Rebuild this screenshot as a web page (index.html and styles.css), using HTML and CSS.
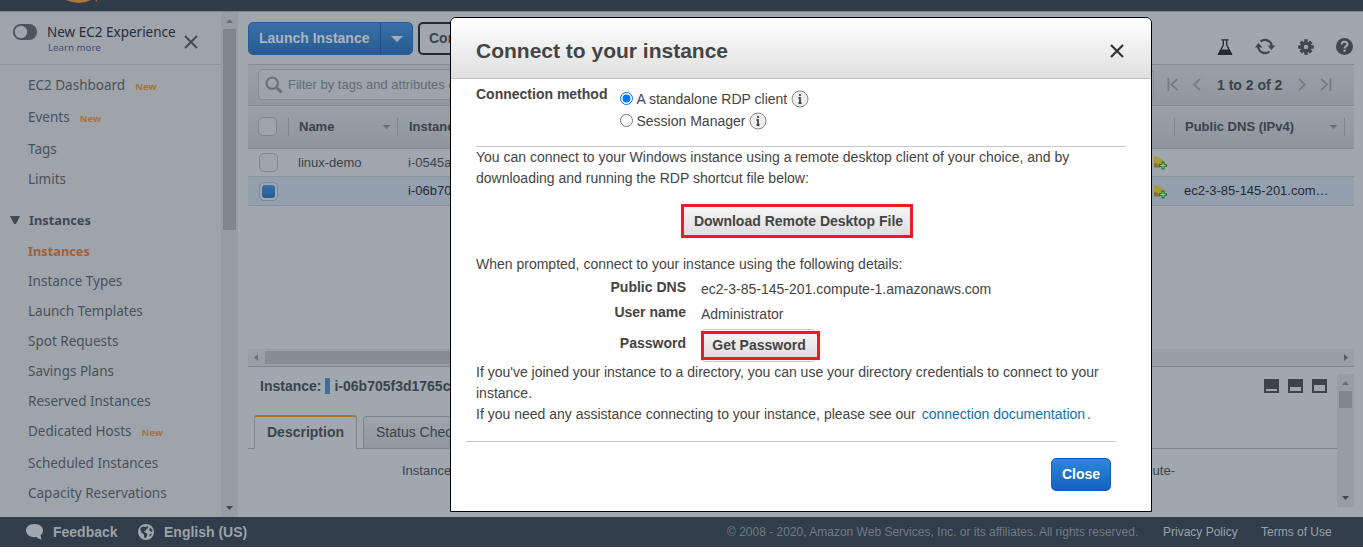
FILE: index.html
```html
<!DOCTYPE html>
<html lang="en">
<head>
<meta charset="utf-8">
<title>Connect to your instance</title>
<link rel="stylesheet" href="styles.css">
</head>
<body>
<header class="topbar">
  <svg class="smile" width="60" height="11" viewBox="0 0 60 11"><path d="M12 -1H41Q27 7 12 -1Z" fill="#a5793c"/><path d="M44.500 0L44 1.500" stroke="#a5793c" stroke-width="1.200"/></svg>
</header>
<div class="page">
  <aside class="sidebar">
    <div class="nav">
      <div class="experience">
        <svg class="toggle" width="24" height="16" viewBox="0 0 24 16"><rect width="24" height="16" rx="8" fill="#4b535e"/><circle cx="8" cy="8" r="6.200" fill="#a0a4ab"/></svg>
        <div class="exp-text"><div class="exp-title">New EC2 Experience</div><div class="exp-link">Learn more</div></div>
        <svg class="exp-close" width="14" height="14" viewBox="0 0 14 14"><path d="M1 1L13 13M13 1L1 13" stroke="#3f4852" stroke-width="1.800"/></svg>
      </div>
      <ul class="menu">
        <li class="h32">EC2 Dashboard<b>New</b></li>
        <li class="h32">Events<b>New</b></li>
        <li class="h30">Tags</li>
        <li class="h30">Limits</li>
        <li class="group"><svg width="10" height="9" viewBox="0 0 10 9"><path d="M0 0H10L6 8H4Z" fill="#434c56"/></svg>Instances</li>
        <li class="h30 current">Instances</li>
        <li class="h30">Instance Types</li>
        <li class="h30">Launch Templates</li>
        <li class="h30">Spot Requests</li>
        <li class="h30">Savings Plans</li>
        <li class="h30">Reserved Instances</li>
        <li class="h32">Dedicated Hosts<b>New</b></li>
        <li class="h30">Scheduled Instances</li>
        <li class="h30">Capacity Reservations</li>
      </ul>
    </div>
    <div class="vscroll">
      <svg width="7" height="4" viewBox="0 0 7 4"><path d="M0 4L3.500 0L7 4Z" fill="#686e76"/></svg>
      <div class="thumb"></div>
      <svg class="down" width="7" height="4" viewBox="0 0 7 4"><path d="M0 0L3.500 4L7 0Z" fill="#434a53"/></svg>
    </div>
  </aside>
  <main class="main">
    <div class="toolbar">
      <div class="launch"><span>Launch Instance</span><i><svg width="12" height="6" viewBox="0 0 12 6"><path d="M0 0H12L6 6Z" fill="#a5adb4"/></svg></i></div>
      <div class="connect">Con</div>
      <div class="tools">
        <svg width="16" height="16" viewBox="0 0 16 16"><path d="M4.500 .8H11.500M6.300 1V6L1.800 14.500H14.200L9.700 6V1" fill="none" stroke="#222a33" stroke-width="1.300"/><path d="M4 10.500H12L15.500 16H.5Z" fill="#222a33"/></svg>
        <svg width="20" height="17" viewBox="0 0 20 17"><path d="M5.500 3.500A6.800 6.800 0 0 1 16.700 8M14.500 13.500A6.800 6.800 0 0 1 3.300 9" fill="none" stroke="#3f474f" stroke-width="2.300"/><path d="M12.500 7.500H20.200L16.500 12ZM-.2 9.500H7.500L3.500 5Z" fill="#3f474f"/></svg>
        <svg width="16" height="16" viewBox="-8 -8 16 16"><g fill="#3f474f"><circle r="5.600"/><path d="M-1.800 -7.800H1.800V7.800H-1.800Z"/><path d="M-1.800 -7.500H1.800V7.500H-1.800Z" transform="rotate(45)"/><path d="M-1.800 -7.800H1.800V7.800H-1.800Z" transform="rotate(90)"/><path d="M-1.800 -7.500H1.800V7.500H-1.800Z" transform="rotate(135)"/></g><circle r="2.200" fill="#a0a7ae"/></svg>
        <svg width="17" height="17" viewBox="0 0 17 17"><circle cx="8.500" cy="8.500" r="8.500" fill="#3f474f"/><path d="M5.500 6.500C5.500 2.800 11.500 2.900 11.500 6.200C11.500 8.400 8.600 8 8.600 10.500" fill="none" stroke="#a0a7ae" stroke-width="2.100"/><rect x="7.500" y="11.600" width="2.200" height="2.200" fill="#a0a7ae"/></svg>
      </div>
    </div>
    <div class="filterbar">
      <div class="search"><svg width="18" height="18" viewBox="0 0 18 18"><circle cx="7.200" cy="7.200" r="5.700" fill="none" stroke="#6b7279" stroke-width="2.200"/><path d="M11.500 11.500L16.500 16.300" stroke="#6b7279" stroke-width="3"/></svg><span>Filter by tags and attributes o</span></div>
      <div class="pager">
        <svg width="12" height="14" viewBox="0 0 12 14"><path d="M1.500 0V13M10.500 .8L4.500 6.500L10.500 12.200" fill="none" stroke="#737b84" stroke-width="1.800"/></svg>
        <svg width="8" height="14" viewBox="0 0 8 14"><path d="M7 .8L1.200 6.500L7 12.200" fill="none" stroke="#737b84" stroke-width="1.800"/></svg>
        <span>1 to 2 of 2</span>
        <svg width="8" height="14" viewBox="0 0 8 14"><path d="M1 .8L6.800 6.500L1 12.200" fill="none" stroke="#737b84" stroke-width="1.800"/></svg>
        <svg width="12" height="14" viewBox="0 0 12 14"><path d="M1 .8L7 6.500L1 12.200M10.500 0V13" fill="none" stroke="#737b84" stroke-width="1.800"/></svg>
      </div>
    </div>
    <div class="row thead">
      <span class="cbx"></span><span class="name">Name<svg width="7" height="4" viewBox="0 0 7 4"><path d="M0 0H7L3.500 4Z" fill="#646c74"/></svg></span><span class="iid">Instance</span><span class="dns">Public DNS (IPv4)<svg width="7" height="4" viewBox="0 0 7 4"><path d="M0 0H7L3.500 4Z" fill="#646c74"/></svg></span>
    </div>
    <div class="row r1">
      <span class="cbx"></span><span class="name">linux-demo</span><span class="iid">i-0545a</span><span class="alarm"><svg width="14" height="15" viewBox="0 0 14 15"><path d="M-2 1L3 1.500L9 5L11 8V12H3L-2 10Z" fill="#a79a35"/><path d="M-2 8Q3 7 6 12.500H0Z" fill="#857336"/><path d="M7.500 6.500H10.500V9H13V12H10.500V14.500H7.500V12H5V9H7.500Z" fill="#267b3b"/><path d="M9 8V13M6.500 10.500H11.500" stroke="#a6c4a6"/></svg></span><span class="dns"></span>
    </div>
    <div class="row r2">
      <span class="cbx on"></span><span class="name"></span><span class="iid">i-06b70</span><span class="alarm"><svg width="14" height="15" viewBox="0 0 14 15"><path d="M-2 1L3 1.500L9 5L11 8V12H3L-2 10Z" fill="#a79a35"/><path d="M-2 8Q3 7 6 12.500H0Z" fill="#857336"/><path d="M7.500 6.500H10.500V9H13V12H10.500V14.500H7.500V12H5V9H7.500Z" fill="#267b3b"/><path d="M9 8V13M6.500 10.500H11.500" stroke="#a6c4a6"/></svg></span><span class="dns">ec2-3-85-145-201.com…</span>
    </div>
    <div class="hscroll">
      <svg width="4" height="7" viewBox="0 0 4 7"><path d="M4 0V7L0 3.500Z" fill="#6a7179"/></svg><div class="hthumb"></div><svg width="4" height="7" viewBox="0 0 4 7"><path d="M0 0V7L4 3.500Z" fill="#555d66"/></svg>
    </div>
    <div class="detail">
      <div class="dbody">
        <div class="dhead"><span>Instance:</span><i></i><span>i-06b705f3d1765c</span>
          <div class="panes">
            <svg width="15" height="14"><rect width="15" height="14" fill="#3b434c"/><rect x="2" y="10" width="11" height="2" fill="#a0a7ae"/></svg>
            <svg width="15" height="14"><rect width="15" height="14" fill="#3b434c"/><rect x="2" y="8" width="11" height="4" fill="#a0a7ae"/></svg>
            <svg width="15" height="14"><rect width="15" height="14" fill="#3b434c"/><rect x="2" y="6" width="11" height="6" fill="#a0a7ae"/></svg>
          </div>
        </div>
        <div class="tabs"><span class="tab active">Description</span><span class="tab">Status Check</span></div>
        <div class="fields"><span>Instance</span><span class="ute">ute-</span></div>
      </div>
      <div class="vscroll small">
        <svg width="7" height="4" viewBox="0 0 7 4"><path d="M0 4L3.500 0L7 4Z" fill="#686e76"/></svg>
        <div class="thumb"></div>
        <svg class="down" width="7" height="4" viewBox="0 0 7 4"><path d="M0 0L3.500 4L7 0Z" fill="#434a53"/></svg>
      </div>
    </div>
  </main>
</div>
<footer class="footer">
  <svg width="18" height="16" viewBox="0 0 18 16"><path d="M8.500 0C13.500 0 17 2.800 17 6.500C17 8.500 16.200 10 14.700 11.200C14.600 13 15.300 14.800 16 15.600C13.500 15.500 11.800 14.500 10.700 13C4.500 13.800 0 11 0 6.500C0 2.800 3.500 0 8.500 0Z" fill="#a0a7ae"/></svg>
  <b class="fb">Feedback</b>
  <svg width="16" height="16" viewBox="0 0 16 16"><circle cx="8" cy="8" r="8" fill="#a0a7ae"/><path d="M2.500 4L5 2.500L8 3L9.500 2L10.500 4L8 5.500L7.500 7L5.500 7.500L8 9L9.500 9.500L9 12L7.500 14.500L6 13V10.500L3.500 8.500L2.500 6.500ZM12.500 4L14.500 6L14 8L12 7L11 5.500ZM12 10L14 9.500L12.500 12L11 12.500Z" fill="#313d4b"/></svg>
  <b class="lang">English (US)</b>
  <span class="copy">© 2008 - 2020, Amazon Web Services, Inc. or its affiliates. All rights reserved.</span>
  <span class="priv">Privacy Policy</span>
  <span class="terms">Terms of Use</span>
</footer>

<section class="modal">
  <div class="mhead"><h1>Connect to your instance</h1><svg width="14" height="14" viewBox="0 0 14 14"><path d="M1 1L13 13M13 1L1 13" stroke="#333" stroke-width="2.200"/></svg></div>
  <div class="method">
    <b>Connection method</b>
    <div class="options">
      <div class="opt"><input type="radio" name="m" checked><span>A standalone RDP client</span><svg width="18" height="18" viewBox="0 0 18 18"><circle cx="9" cy="9" r="8" fill="#eee" stroke="#888"/><path d="M9 4V6M7.500 8H9V13M7.500 13H10.500" stroke="#444" stroke-width="1.800" fill="none"/></svg></div>
      <div class="opt"><input type="radio" name="m"><span>Session Manager</span><svg width="18" height="18" viewBox="0 0 18 18"><circle cx="9" cy="9" r="8" fill="#eee" stroke="#888"/><path d="M9 4V6M7.500 8H9V13M7.500 13H10.500" stroke="#444" stroke-width="1.800" fill="none"/></svg></div>
    </div>
  </div>
  <p class="intro">You can connect to your Windows instance using a remote desktop client of your choice, and by<br>downloading and running the RDP shortcut file below:</p>
  <div class="dl"><button class="btn download">Download Remote Desktop File</button></div>
  <p class="prompt">When prompted, connect to your instance using the following details:</p>
  <dl class="creds">
    <dt>Public DNS</dt><dd>ec2-3-85-145-201.compute-1.amazonaws.com</dd>
    <dt>User name</dt><dd>Administrator</dd>
    <dt class="pw">Password</dt><dd class="pwcell"><span class="getwrap"><button class="btn get">Get Password</button></span></dd>
  </dl>
  <p class="help">If you've joined your instance to a directory, you can use your directory credentials to connect to your<br>instance.<br>If you need any assistance connecting to your instance, please see our <a>connection documentation</a>.</p>
  <div class="mfoot"><button class="close">Close</button></div>
</section>
</body>
</html>
```

FILE: styles.css
```css
* { box-sizing: border-box; }
body { margin: 0; width: 1363px; height: 553px; overflow: hidden; background: #fff; font: 13px/18px "Liberation Sans", Arial, sans-serif; color: #3b434c; display: flex; flex-direction: column; }
svg { display: block; flex: none; }
.topbar { height: 11px; background: #313c4a; flex: none; padding-left: 52px; }
.page { height: 506px; flex: none; display: flex; background: #a0a7ae; border-top: 1px solid #7d838e; }

.sidebar { width: 238px; display: flex; background: #9fa4ab; font-family: "Noto Sans", "Open Sans", sans-serif; }
.nav { width: 221px; }
.experience { height: 53px; border-bottom: 1px solid #8e949e; display: flex; padding: 12px 0 0 13px; }
.exp-text { margin-left: 10px; width: 137px; white-space: nowrap; }
.exp-title { font-size: 13.500px; line-height: 18px; color: #252d38; margin-top: -1px; }
.exp-link { font-size: 9.700px; line-height: 14px; color: #3d4f82; margin-left: 1px; }
.exp-close { margin-top: 11px; }
.menu { list-style: none; margin: 0; padding: 5px 0 0 28px; font-size: 13.500px; color: #48515c; white-space: nowrap; }
.menu li { display: flex; align-items: center; }
.menu b { font-size: 9.500px; color: #a9713a; margin-left: 10px; margin-top: 3px; }
.menu .h32 { height: 32px; padding-bottom: 2px; }
.menu .h30 { height: 30px; }
.menu .group { height: 32px; margin: 10px 0 0 -18px; font-size: 12.800px; font-weight: bold; color: #3f4852; }
.group svg { margin-right: 9px; }
.menu .current { color: #a3602f; font-size: 12.800px; font-weight: bold; }
.vscroll { width: 17px; background: #969da4; display: flex; flex-direction: column; align-items: center; padding: 7px 0; }
.thumb { width: 13px; height: 201px; margin-top: 6px; background: #7f868c; }
.down { margin-top: auto; }

.main { flex: 1; padding: 10px 9px 0 10px; min-width: 0; }
.toolbar { height: 42px; display: flex; }
.launch { width: 165px; height: 33px; border: 1px solid #265b95; border-radius: 5px; background: linear-gradient(#3a70a8, #265b93); color: #adb5bc; font-size: 14px; font-weight: bold; display: flex; align-items: center; }
.launch span { width: 132px; padding-left: 10px; line-height: 31px; border-right: 1px solid #1f4f87; white-space: nowrap; }
.launch i { flex: 1; display: grid; place-items: center; }
.connect { margin-left: 5px; width: 90px; height: 33px; border: 2px solid #222b35; border-radius: 5px; line-height: 29px; padding-left: 9px; font-size: 14px; font-weight: bold; }
.tools { margin: 16px 1px 0 auto; width: 136px; height: 17px; display: flex; align-items: center; justify-content: space-between; }
.filterbar { height: 42px; background: linear-gradient(#99a0a7, #90979e); border-top: 1px solid #848b92; border-bottom: 1px solid #7f868d; display: flex; justify-content: space-between; padding-top: 4px; }
.search { margin-left: 10px; width: 896px; height: 31px; border: 1px solid #858c94; border-radius: 5px; background: #9da4ab; display: flex; align-items: center; padding-left: 6px; color: #646b73; }
.search span { margin-left: 5px; white-space: nowrap; }
.pager { width: 187px; height: 32px; display: flex; align-items: center; font-size: 14px; font-weight: bold; }
.pager span { width: 67px; margin: 0 14px 0 16px; white-space: nowrap; }
.pager svg + svg { margin-left: 14px; }
.row { display: flex; align-items: center; height: 28px; padding-left: 11px; }
.row .iid { width: 746px; }
.row .name { width: 110px; margin-left: 20px; }
.thead { height: 43px; background: linear-gradient(#99a0a7, #8e959c); border-top: 1px solid #a2a9b0; border-bottom: 1px solid #7f868d; font-weight: bold; padding: 0 0 2px 10px; }
.thead .name { border-left: 1px solid #7d858c; width: 109px; margin-left: 11px; padding: 0 7px 0 10px; display: flex; align-items: center; justify-content: space-between; }
.thead .iid { border-left: 1px solid #7d858c; padding-left: 11px; width: 777px; }
.cbx { width: 19px; height: 19px; border: 1px solid #7f868e; border-radius: 5px; background: #9da4ab; flex: none; }
.cbx.on { padding: 2px; background: #a0a7ae; display: grid; }
.cbx.on::before { content: ""; background: linear-gradient(#3a70a8, #265b93); border-radius: 3px; }
.alarm { width: 30px; margin-left: -1px; padding-left: 1px; }
.r1 .dns, .r2 .dns { width: 155px; padding-left: 1px; }
.thead .dns { width: 171px; border-left: 1px solid #7d858c; border-right: 1px solid #7d858c; padding: 0 7px 0 10px; display: flex; align-items: center; justify-content: space-between; }
.thead span { line-height: 18px; white-space: nowrap; }
.r1 { border-bottom: 1px solid #8c939b; }
.r2 { height: 29px; background: #95a0ae; border-bottom: 1px solid #89929b; color: #222a33; }
.hscroll { height: 18px; margin-top: 143px; background: #999fa6; border-bottom: 1px solid #7d848b; display: flex; align-items: center; padding: 0 6px; }
.hthumb { width: 870px; height: 13px; margin-left: 7px; margin-right: auto; background: #868d94; }
.detail { display: flex; height: 133px; margin-top: 7px; }
.dbody { flex: 1; }
.dhead { display: flex; align-items: center; height: 24px; padding-left: 12px; font-weight: bold; font-size: 14px; }
.dhead i { width: 5px; height: 16px; background: #3c6f9c; margin: 0 4px; }
.panes { display: flex; gap: 9px; margin: 0 10px 0 auto; }
.tabs { display: flex; margin-top: 17px; height: 34px; padding-left: 6px; border-bottom: 1px solid #7f868d; }
.tab { height: 33px; margin-top: 1px; border: 1px solid #7f868d; border-radius: 3px 3px 0 0; line-height: 31px; padding-left: 12px; margin-left: 6px; width: 110px; font-size: 14px; background: linear-gradient(#9da4ab, #90979e); white-space: nowrap; }
.tab.active { margin: 0; width: 103px; height: 34px; border-top: 2px solid #aa762d; border-bottom: 0; background: #a0a7ae; font-weight: bold; line-height: 30px; }
.fields { display: flex; justify-content: space-between; padding: 13px 162px 0 154px; }
.small { padding: 7px 0; }
.small .thumb { height: 17px; }

.footer { height: 30px; background: #313d4b; flex: none; display: flex; align-items: center; padding-left: 26px; color: #9ba3ab; font-size: 12px; white-space: nowrap; }
.footer b { font-size: 14px; }
.fb { width: 85px; margin-left: 9px; }
.lang { margin-left: 10px; width: 563px; }
.copy { color: #717b86; width: 436px; }
.priv { width: 98px; }

.modal { position: absolute; left: 450px; top: 17px; width: 702px; height: 495px; background: #fff; border: 1px solid #000; border-radius: 6px 6px 0 0; color: #444; font-size: 14px; line-height: 21px; }
.modal p { margin: 0; padding-left: 25px; white-space: nowrap; }
.mhead { height: 61px; border-bottom: 1px solid #bfbfbf; border-radius: 5px 5px 0 0; background: linear-gradient(#fff, #dfdfdf); display: flex; align-items: center; justify-content: space-between; padding: 6px 27px 0 25px; }
.mhead h1 { font-size: 21px; margin: -2px 0 0; color: #444; white-space: nowrap; }
.method { margin-left: 25px; width: 650px; height: 68px; border-bottom: 1px solid #c8c8c8; display: flex; }
.method b { width: 144px; margin-top: 5px; }
.options { padding-top: 9px; }
.opt { display: flex; align-items: center; height: 22px; }
.opt input { width: 13px; height: 13px; margin: 0 3.500px 2px 0; }
.opt svg { margin-left: 4px; }
.dl { display: flex; margin: 15px 0 0 230px; }
.btn { border: 3px solid #ed1c24; background: linear-gradient(#f5f5f5, #dedede); color: #444; font: bold 14px "Liberation Sans", Arial, sans-serif; white-space: nowrap; }
.download { width: 232px; height: 34px; padding: 0 0 0 3px; }
.modal .prompt { margin-top: 16px; }
.creds { margin: 0; display: grid; grid-template-columns: 235px 1fr; column-gap: 15px; grid-template-rows: 25px 25px 35px; padding-top: 2px; }
.creds dt { text-align: right; font-weight: bold; }
.creds dd { margin: 2px 0 0; }
.creds .pw { padding-top: 6px; }
.getwrap { display: block; width: 115px; height: 33px; border: 1px solid #ccc; border-radius: 4px; padding-top: 1px; }
.get { display: block; width: 119px; height: 29px; margin-left: -1px; padding: 0 3px 2px 0; }
.help a { color: #146eb4; padding: 0 2px; }
.mfoot { margin: 16px 35px 0 15px; border-top: 1px solid #c8c8c8; display: flex; justify-content: flex-end; padding: 16px 5px 0 0; }
.close { width: 60px; height: 33px; border: 1px solid #1160b5; border-radius: 5px; background: linear-gradient(#2f86dc, #1163bd); color: #fff; font: bold 14px "Liberation Sans", Arial, sans-serif; padding: 0 0 2px; }
```
